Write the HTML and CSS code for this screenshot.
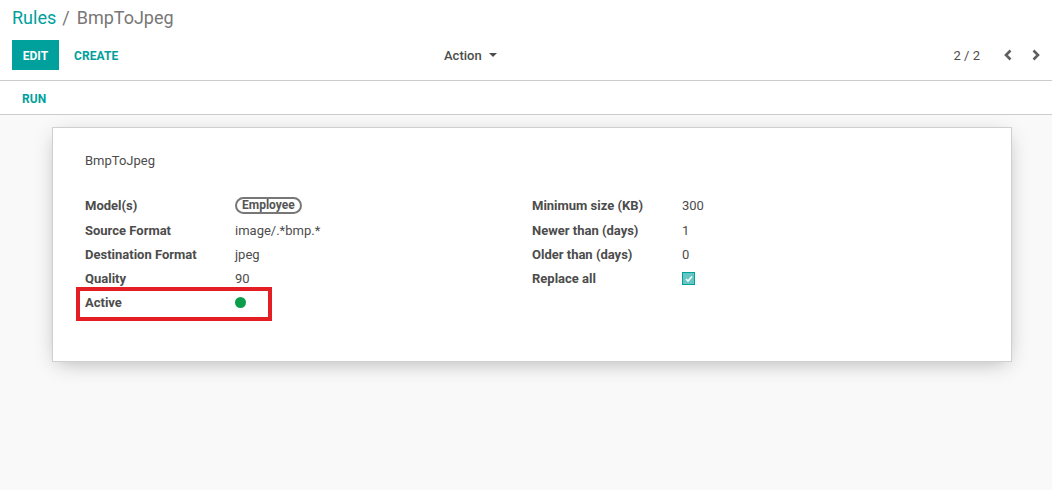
FILE: index.html
```html
<!DOCTYPE html>
<html>
<head>
<meta charset="utf-8">
<link rel="stylesheet" href="styles.css">
</head>
<body>
<div class="control-panel">
  <div class="breadcrumb"><a class="crumb-link">Rules</a><span class="crumb-sep">/</span><span class="crumb-cur">BmpToJpeg</span></div>
  <div class="cp-row">
    <div class="cp-left">
      <button class="btn btn-primary">EDIT</button>
      <button class="btn btn-link">CREATE</button>
    </div>
    <div class="cp-center">
      <span class="action">Action <span class="caret"></span></span>
    </div>
    <div class="cp-right">
      <span class="pager">2 / 2</span>
      <span class="pager-btn prev"><svg width="10" height="12" viewBox="0 0 10 12"><path d="M7.5 1.5 L3 6 L7.5 10.5" fill="none" stroke="#5f5f5f" stroke-width="2.6"/></svg></span>
      <span class="pager-btn next"><svg width="10" height="12" viewBox="0 0 10 12"><path d="M2.5 1.5 L7 6 L2.5 10.5" fill="none" stroke="#5f5f5f" stroke-width="2.6"/></svg></span>
    </div>
  </div>
</div>
<div class="statusbar">
  <button class="btn btn-link run">RUN</button>
</div>
<div class="content">
  <div class="sheet">
    <div class="title">BmpToJpeg</div>
    <div class="groups">
      <div class="group">
        <div class="row"><div class="label">Model(s)</div><div class="value"><span class="badge">Employee</span></div></div>
        <div class="row"><div class="label">Source Format</div><div class="value">image/.*bmp.*</div></div>
        <div class="row"><div class="label">Destination Format</div><div class="value">jpeg</div></div>
        <div class="row"><div class="label">Quality</div><div class="value">90</div></div>
        <div class="row"><div class="label">Active</div><div class="value"><span class="dot"></span></div></div>
      </div>
      <div class="group">
        <div class="row"><div class="label">Minimum size (KB)</div><div class="value">300</div></div>
        <div class="row"><div class="label">Newer than (days)</div><div class="value">1</div></div>
        <div class="row"><div class="label">Older than (days)</div><div class="value">0</div></div>
        <div class="row"><div class="label">Replace all</div><div class="value"><span class="checkbox"><svg width="8" height="7" viewBox="0 0 8 7"><path d="M1 4 L3 6 L7 1.5" fill="none" stroke="#ffffff" stroke-width="1.6"/></svg></span></div></div>
      </div>
    </div>
    <div class="highlight"></div>
  </div>
</div>
</body>
</html>
```

FILE: styles.css
```css
html, body {
  margin: 0;
  padding: 0;
  height: 100%;
}
body {
  font-family: Roboto, "Noto Sans", "Liberation Sans", sans-serif;
  font-size: 13px;
  color: #4c4c4c;
  background: #f9f9f9;
  display: flex;
  flex-direction: column;
}
.control-panel {
  background: #fff;
  padding: 6px 10px 10px 12px;
  border-bottom: 1px solid #cccccc;
}
.breadcrumb {
  font-size: 18px;
  line-height: 24px;
  height: 24px;
}
.crumb-link {
  color: #00a09d;
}
.crumb-sep {
  color: #777;
  margin: 0 7px 0 6px;
}
.crumb-cur {
  color: #777777;
}
.cp-row {
  display: flex;
  align-items: center;
  margin-top: 10px;
  height: 30px;
}
.cp-left {
  display: flex;
  align-items: center;
  width: 432px;
  flex: none;
}
.cp-center {
  flex: 1;
  display: flex;
  align-items: center;
}
.cp-right {
  flex: none;
  display: flex;
  align-items: center;
  justify-content: flex-end;
}
.btn {
  font-family: Roboto, "Noto Sans", "Liberation Sans", sans-serif;
  font-size: 12px;
  font-weight: 700;
  border: none;
  background: none;
  cursor: pointer;
  height: 30px;
  padding: 2px 10px 0 10px;
  letter-spacing: 0.1px;
}
.btn-primary {
  background: #00a09d;
  color: #fff;
  width: 47px;
  padding: 2px 0 0 0;
}
.btn-link {
  color: #00a09d;
  margin-left: 5px;
}
.action {
  color: #4c4c4c;
  font-weight: 500;
  font-size: 13px;
  display: flex;
  align-items: center;
}
.caret {
  display: inline-block;
  width: 0;
  height: 0;
  border-left: 4px solid transparent;
  border-right: 4px solid transparent;
  border-top: 4px solid #4c4c4c;
  margin-left: 7px;
}
.pager {
  color: #4c4c4c;
  font-size: 13px;
  margin-right: 20px;
}
.pager-btn {
  display: inline-flex;
  justify-content: center;
  align-items: center;
}
.prev {
  width: 16px;
}
.next {
  width: 12px;
  margin-left: 14px;
}
.statusbar {
  background: #fff;
  height: 33px;
  border-bottom: 1px solid #cccccc;
  display: flex;
  align-items: center;
  padding-left: 12px;
}
.run {
  margin-left: 0;
  height: 33px;
}
.content {
  flex: 1;
  background: #f9f9f9;
  padding-top: 12px;
}
.sheet {
  position: relative;
  margin-left: 52px;
  width: 960px;
  background: #fff;
  border: 1px solid #cfcfcf;
  box-shadow: 0 5px 20px -5px rgba(0, 0, 0, 0.3);
  padding: 24px 32px 44px 32px;
  box-sizing: border-box;
  min-height: 235px;
}
.title {
  font-size: 13px;
  line-height: 18px;
  color: #4c4c4c;
}
.groups {
  display: flex;
  margin-top: 23px;
}
.group {
  flex: 1;
}
.row {
  display: flex;
  height: 24px;
  align-items: center;
}
.row:first-child {
  height: 25px;
}
.label {
  width: 150px;
  font-weight: 700;
  color: #4c4c4c;
}
.value {
  color: #4c4c4c;
  display: flex;
  align-items: center;
}
.badge {
  display: inline-block;
  border: 2px solid #777;
  border-radius: 10px;
  padding: 0 5px;
  font-size: 12px;
  font-weight: 700;
  line-height: 13px;
  color: #555;
}
.dot {
  display: inline-block;
  width: 11px;
  height: 11px;
  border-radius: 50%;
  background: #0a9e4c;
}
.checkbox {
  display: inline-flex;
  width: 11px;
  height: 11px;
  border: 1px solid #00a09d;
  background: #66c6c4;
  align-items: center;
  justify-content: center;
}
.highlight {
  position: absolute;
  left: 23px;
  top: 159px;
  width: 188px;
  height: 26px;
  border: 4px solid #e31e25;
}
```
